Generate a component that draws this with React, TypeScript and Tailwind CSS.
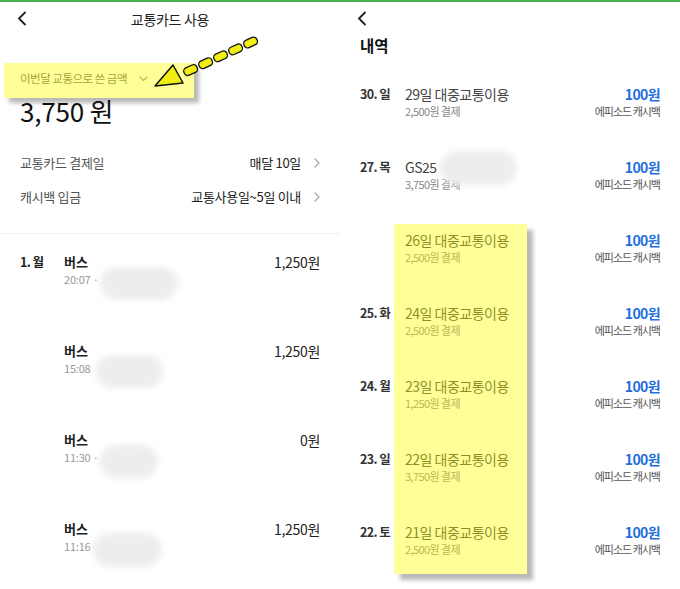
import React from "react";

const font = "font-['Noto_Sans_CJK_KR','Noto_Sans',sans-serif]";

function BackIcon({ className }: { className?: string }) {
  return (
    <svg className={className} width="10" height="15" viewBox="0 0 10 15" fill="none">
      <path d="M8 1.5 2 7.5l6 6" stroke="#222" strokeWidth="1.8" strokeLinecap="round" strokeLinejoin="round" />
    </svg>
  );
}

function ChevronRight() {
  return (
    <svg width="6" height="10" viewBox="0 0 6 10" fill="none" className="ml-[13px]">
      <path d="M1 1l4 4-4 4" stroke="#aaa" strokeWidth="1.2" strokeLinecap="round" strokeLinejoin="round" />
    </svg>
  );
}

function ChevronDown() {
  return (
    <svg width="9" height="6" viewBox="0 0 9 6" fill="none" className="ml-[12px]">
      <path d="M1 1l3.5 3.5L8 1" stroke="#888" strokeWidth="1.1" strokeLinecap="round" strokeLinejoin="round" />
    </svg>
  );
}

// hand-drawn dashed arrow on the first screenshot
function DashedArrow() {
  const tail = { x: 256, y: 38 };
  const head = { x: 180, y: 73 };
  const len = Math.hypot(head.x - tail.x, head.y - tail.y);
  const dx = (head.x - tail.x) / len;
  const dy = (head.y - tail.y) / len;
  const angle = (Math.atan2(dy, dx) * 180) / Math.PI;
  const dashes = [0, 1, 2, 3, 4].map((i) => ({
    x: tail.x + dx * (i * 16.5 + 6),
    y: tail.y + dy * (i * 16.5 + 6),
  }));
  return (
    <svg className="pointer-events-none absolute left-0 top-0" width="340" height="120" viewBox="0 0 340 120">
      {dashes.map((d, i) => (
        <rect
          key={i}
          x={-7}
          y={-4}
          width={14}
          height={8}
          rx={3.5}
          fill="#f2ee12"
          stroke="#111"
          strokeWidth="1.3"
          transform={`translate(${d.x} ${d.y}) rotate(${angle})`}
        />
      ))}
      <path d="M155 84 L173 63 L183 81 Z" fill="#f2ee12" stroke="#111" strokeWidth="1.5" strokeLinejoin="round" />
    </svg>
  );
}

function Blob({ className }: { className: string }) {
  return <div className={`absolute rounded-full bg-[#ededed] blur-[3px] ${className}`} />;
}

const rides = [
  { date: "1. 월", time: "20:07 ·", amount: "1,250원" },
  { date: "", time: "15:08", amount: "1,250원" },
  { date: "", time: "11:30 ·", amount: "0원" },
  { date: "", time: "11:16", amount: "1,250원" },
];

const history = [
  { date: "30. 일", title: "29일 대중교통이용", paid: "2,500원 결제" },
  { date: "27. 목", title: "GS25", paid: "3,750원 결제" },
  { date: "", title: "26일 대중교통이용", paid: "2,500원 결제" },
  { date: "25. 화", title: "24일 대중교통이용", paid: "2,500원 결제" },
  { date: "24. 월", title: "23일 대중교통이용", paid: "1,250원 결제" },
  { date: "23. 일", title: "22일 대중교통이용", paid: "3,750원 결제" },
  { date: "22. 토", title: "21일 대중교통이용", paid: "2,500원 결제" },
];

export default function App() {
  return (
    <div className={`flex h-[589px] w-[680px] overflow-hidden border-t-2 border-[#45b34c] bg-white ${font}`}>
      {/* LEFT: 교통카드 사용 */}
      <div className="relative w-[340px] shrink-0">
        <header className="relative flex h-[34px] items-center justify-center">
          <BackIcon className="absolute left-[17px] top-[9px]" />
          <h1 className="text-[14px] tracking-[-0.3px] text-[#222]">교통카드 사용</h1>
        </header>

        <div className="px-5">
          <div className="mt-[33px] flex h-[20px] items-center text-[11.5px] tracking-[-0.5px] text-[#666]">
            이번달 교통으로 쓴 금액
            <ChevronDown />
          </div>
          <p className="mt-[6px] h-[32px] text-[26px] leading-[32px] tracking-[-0.2px] text-[#111]">3,750 원</p>

          <div className="mt-[19px] text-[13px] tracking-[-0.3px]">
            <div className="flex h-[34px] items-center justify-between text-[#555]">
              <span>교통카드 결제일</span>
              <span className="flex items-center text-[#222]">
                매달 10일
                <ChevronRight />
              </span>
            </div>
            <div className="flex h-[34px] items-center justify-between text-[#555]">
              <span>캐시백 입금</span>
              <span className="flex items-center text-[#222]">
                교통사용일~5일 이내
                <ChevronRight />
              </span>
            </div>
          </div>
        </div>

        <div className="mt-[19px] border-t border-[#f1f1f1] px-5 pt-[19px]">
          {rides.map((r, i) => (
            <div key={i} className="flex h-[89px] items-start">
              <span className="w-[44px] text-[12.5px] font-semibold leading-[18px] tracking-[-0.6px] text-[#222]">{r.date}</span>
              <div className="flex-1">
                <p className="text-[13px] font-semibold leading-[18px] text-[#222]">버스</p>
                <p className="text-[11px] leading-[16px] tracking-[-0.2px] text-[#999]">{r.time}</p>
              </div>
              <span className="text-[14px] leading-[18px] tracking-[-0.3px] text-[#222]">{r.amount}</span>
            </div>
          ))}
        </div>

        {/* blurred places */}
        <Blob className="left-[100px] top-[265px] h-[33px] w-[78px]" />
        <Blob className="left-[96px] top-[353px] h-[33px] w-[67px]" />
        <Blob className="left-[100px] top-[443px] h-[33px] w-[58px]" />
        <Blob className="left-[93px] top-[531px] h-[34px] w-[69px]" />

        {/* annotation */}
        <div className="absolute left-[4px] top-[61px] h-[35px] w-[190px] bg-[#ffff00]/40 shadow-[5px_5px_4px_rgba(0,0,0,0.28)]" />
        <DashedArrow />
      </div>

      {/* RIGHT: 내역 */}
      <div className="relative w-[340px] shrink-0">
        <header className="relative h-[33px]">
          <BackIcon className="absolute left-[17px] top-[9px]" />
        </header>
        <h2 className="h-[22px] px-5 text-[15.5px] font-bold leading-[20px] text-[#111]">내역</h2>

        <div className="mt-[28px] px-5">
          {history.map((h, i) => (
            <div key={i} className="flex h-[73px] items-start">
              <span className="w-[45px] text-[12.5px] font-semibold leading-[18px] tracking-[-0.6px] text-[#333]">{h.date}</span>
              <div className="flex-1">
                <p className="text-[14px] leading-[18px] tracking-[-0.5px] text-[#444]">{h.title}</p>
                <p className="text-[11px] leading-[16px] tracking-[-0.6px] text-[#888]">{h.paid}</p>
              </div>
              <div className="text-right">
                <p className="text-[14px] font-bold leading-[18px] tracking-[-0.6px] text-[#1f6fe0]">100원</p>
                <p className="text-[11px] leading-[16px] tracking-[-1px] text-[#555]">에피소드 캐시백</p>
              </div>
            </div>
          ))}
        </div>

        <Blob className="left-[100px] top-[149px] h-[34px] w-[77px]" />

        {/* annotation */}
        <div className="absolute left-[54px] top-[222px] h-[350px] w-[133px] bg-[#ffff00]/40 shadow-[6px_6px_4px_rgba(0,0,0,0.28)]" />
      </div>
    </div>
  );
}
